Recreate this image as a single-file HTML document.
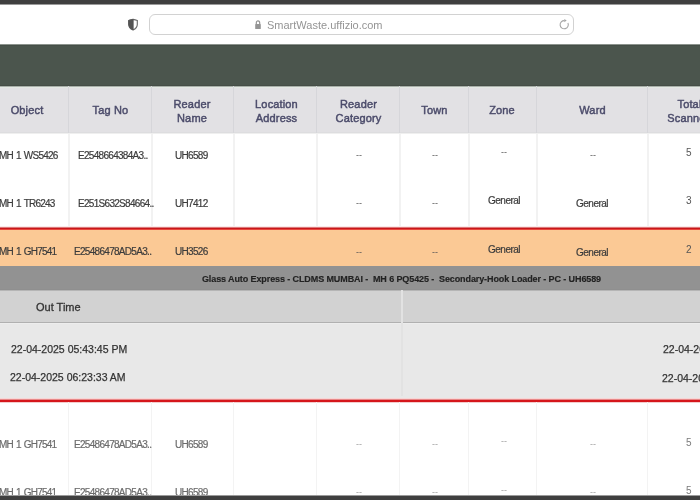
<!DOCTYPE html>
<html><head><meta charset="utf-8">
<style>
*{margin:0;padding:0;box-sizing:border-box}
html,body{width:700px;height:500px;overflow:hidden;background:#fff;font-family:"Liberation Sans",sans-serif}
.a{position:absolute}
.t{position:absolute;white-space:nowrap;line-height:1;will-change:transform}
.vl{position:absolute;width:1px;background:#e6e6e6}
.hd{font-size:11px;color:#4b4b6a;-webkit-text-stroke:0.45px #4b4b6a;letter-spacing:0.15px;text-align:center}
.bd{font-size:10px;letter-spacing:-0.7px;color:#3c3c3c;-webkit-text-stroke:0.2px currentColor}
.mh{letter-spacing:-0.8px;word-spacing:1.1px}
.gn{letter-spacing:-0.5px}
.dash{font-size:9px;color:#555}
</style></head><body>
<!-- top dark bar -->
<div class="a" style="left:0;top:0;width:700px;height:4px;background:#3f3f3f"></div>
<div class="a" style="left:0;top:4px;width:700px;height:1px;background:#9a9a9a"></div>
<!-- toolbar -->
<div class="a" style="left:0;top:5px;width:700px;height:39px;background:#fff"></div>
<!-- shield -->
<svg class="a" style="left:127px;top:18px" width="12" height="13" viewBox="0 0 12 13">
<path d="M6 1.4 Q8.4 1.7 10.3 2.5 L10.3 6.4 Q10.3 10 6 11.9 Q1.7 10 1.7 6.4 L1.7 2.5 Q3.6 1.7 6 1.4 Z" fill="none" stroke="#6c6c6c" stroke-width="1.15"/>
<path d="M6.2 1.4 Q3.6 1.7 1.7 2.5 L1.7 6.4 Q1.7 10 6.2 11.9 Z" fill="#545454" stroke="#545454" stroke-width="0.8"/>
</svg>
<!-- url pill -->
<div class="a" style="left:149px;top:14px;width:425px;height:21px;border:1px solid #d2d2d2;border-radius:6px;background:#fff"></div>
<svg class="a" style="left:254px;top:20px" width="8" height="10" viewBox="0 0 8 10">
<path d="M2.3 4.5 V3 C2.3 1.7 3.1 0.9 4 0.9 C4.9 0.9 5.7 1.7 5.7 3 V4.5" fill="none" stroke="#959595" stroke-width="1.2"/>
<rect x="1.2" y="4.1" width="5.6" height="4.9" rx="0.6" fill="#959595"/>
</svg>
<div class="t" style="left:267px;top:20px;font-size:11px;color:#949494">SmartWaste.uffizio.com</div>
<svg class="a" style="left:559px;top:18px" width="12" height="13" viewBox="0 0 12 13">
<path d="M8.9 4.9 A4.1 4.1 0 1 1 5.5 2.6" fill="none" stroke="#a5a5a5" stroke-width="1.1"/>
<path d="M5.3 0.9 L7.7 2.6 L5.3 4.3 Z" fill="#a5a5a5"/>
</svg>
<!-- green bar -->
<div class="a" style="left:0;top:44px;width:700px;height:42px;background:#4b554d"></div>
<div class="a" style="left:0;top:44px;width:700px;height:1px;background:#8c938d"></div>
<div class="a" style="left:0;top:45px;width:700px;height:1px;background:#454e47"></div>
<div class="a" style="left:0;top:85px;width:700px;height:1px;background:#454d46"></div>
<!-- header -->
<div class="a" style="left:0;top:86px;width:700px;height:47px;background:#e2e1e4"></div>
<div class="a" style="left:0;top:86px;width:700px;height:1px;background:#a9b0aa"></div>
<div class="a" style="left:0;top:87px;width:700px;height:1px;background:#e4e8e4"></div>
<div class="a" style="left:0;top:132px;width:700px;height:1px;background:#dddddf"></div>
<div class="a" style="left:0;top:133px;width:700px;height:1px;background:#efefef"></div>
<div class="vl" style="left:68px;top:86px;height:47px;background:#d6d6da"></div>
<div class="vl" style="left:68px;top:134px;height:93px;width:2px;background:#f2f2f2"></div>
<div class="vl" style="left:151px;top:86px;height:47px;background:#d6d6da"></div>
<div class="vl" style="left:151px;top:134px;height:93px;width:2px;background:#f2f2f2"></div>
<div class="vl" style="left:233px;top:86px;height:47px;background:#d6d6da"></div>
<div class="vl" style="left:233px;top:134px;height:93px;width:2px;background:#f2f2f2"></div>
<div class="vl" style="left:316px;top:86px;height:47px;background:#d6d6da"></div>
<div class="vl" style="left:316px;top:134px;height:93px;width:2px;background:#f2f2f2"></div>
<div class="vl" style="left:399px;top:86px;height:47px;background:#d6d6da"></div>
<div class="vl" style="left:399px;top:134px;height:93px;width:2px;background:#f2f2f2"></div>
<div class="vl" style="left:468px;top:86px;height:47px;background:#d6d6da"></div>
<div class="vl" style="left:468px;top:134px;height:93px;width:2px;background:#f2f2f2"></div>
<div class="vl" style="left:536px;top:86px;height:47px;background:#d6d6da"></div>
<div class="vl" style="left:536px;top:134px;height:93px;width:2px;background:#f2f2f2"></div>
<div class="vl" style="left:647px;top:86px;height:47px;background:#d6d6da"></div>
<div class="vl" style="left:647px;top:134px;height:93px;width:2px;background:#f2f2f2"></div>

<div class="t hd" style="left:-14px;width:82px;top:105px">Object</div>
<div class="t hd" style="left:69px;width:83px;top:105px">Tag No</div>
<div class="t hd" style="left:151px;width:82px;top:96.5px;line-height:14px">Reader<br>Name</div>
<div class="t hd" style="left:234.5px;width:83px;top:96.5px;line-height:14px">Location<br>Address</div>
<div class="t hd" style="left:317px;width:83px;top:96.5px;line-height:14px">Reader<br>Category</div>
<div class="t hd" style="left:400px;width:69px;top:105px">Town</div>
<div class="t hd" style="left:468px;width:68px;top:105px">Zone</div>
<div class="t hd" style="left:537px;width:111px;top:105px">Ward</div>
<div class="t hd" style="left:647px;width:85px;top:96.5px;line-height:14px">Total<br>Scanned</div>

<!-- rows 1-2 -->
<div class="t bd mh" style="left:-1px;top:151px">MH 1 WS5426</div>
<div class="t bd" style="left:78px;top:151px">E2548664384A3..</div>
<div class="t bd" style="left:175px;top:151px">UH6589</div>
<div class="t dash" style="left:356px;top:151px">--</div>
<div class="t dash" style="left:432px;top:151px">--</div>
<div class="t dash" style="left:501px;top:148px">--</div>
<div class="t dash" style="left:590px;top:151px">--</div>
<div class="t bd" style="left:686px;top:148px;-webkit-text-stroke:0;color:#555">5</div>

<div class="t bd mh" style="left:-1px;top:199px">MH 1 TR6243</div>
<div class="t bd" style="left:78px;top:199px">E251S632S84664..</div>
<div class="t bd" style="left:175px;top:199px">UH7412</div>
<div class="t dash" style="left:356px;top:199px">--</div>
<div class="t dash" style="left:432px;top:199px">--</div>
<div class="t bd gn" style="left:488px;top:196px">General</div>
<div class="t bd gn" style="left:576px;top:199px">General</div>
<div class="t bd" style="left:686px;top:196px;-webkit-text-stroke:0;color:#555">3</div>

<!-- red line -->
<div class="a" style="left:0;top:226px;width:700px;height:1px;background:#fbeaea"></div>
<div class="a" style="left:0;top:227px;width:700px;height:1px;background:#dc7a7a"></div>
<div class="a" style="left:0;top:228px;width:700px;height:1px;background:#c8161a"></div>
<div class="a" style="left:0;top:229px;width:700px;height:1px;background:#e8463c"></div>
<!-- orange row -->
<div class="a" style="left:0;top:230px;width:700px;height:36px;background:#fbc995"></div>
<div class="t bd mh" style="left:-1px;top:247px">MH 1 GH7541</div>
<div class="t bd" style="left:74px;top:247px">E25486478AD5A3..</div>
<div class="t bd" style="left:175px;top:247px">UH3526</div>
<div class="t dash" style="left:356px;top:248px">--</div>
<div class="t dash" style="left:432px;top:248px">--</div>
<div class="t bd gn" style="left:488px;top:245px">General</div>
<div class="t bd gn" style="left:576px;top:248px">General</div>
<div class="t bd" style="left:686px;top:245px;-webkit-text-stroke:0;color:#555">2</div>

<!-- gray title bar -->
<div class="a" style="left:0;top:266px;width:700px;height:24px;background:#929292"></div>
<div class="t" style="left:0;width:803px;top:275px;font-size:9px;letter-spacing:-0.1px;font-weight:bold;color:#222;-webkit-text-stroke:0.15px #222;text-align:center;white-space:pre">Glass Auto Express - CLDMS MUMBAI -  MH 6 PQ5425 -  Secondary-Hook Loader - PC - UH6589</div>

<!-- sub header -->
<div class="a" style="left:0;top:290px;width:700px;height:32px;background:#d2d2d2"></div>
<div class="a" style="left:0;top:290px;width:700px;height:1px;background:#b5b5b5"></div>
<div class="a" style="left:0;top:289px;width:700px;height:1px;background:#8f8f8f"></div>
<div class="a" style="left:0;top:322px;width:700px;height:1px;background:#b0b0b0"></div>
<div class="a" style="left:0;top:323px;width:700px;height:75px;background:#e8e8e8"></div>
<div class="a" style="left:0;top:323px;width:700px;height:1px;background:#ededed"></div>
<div class="vl" style="left:401px;top:290px;height:106px;width:2px;background:#e2e2e2"></div>
<div class="t" style="left:36px;top:301.5px;font-size:11px;color:#333;-webkit-text-stroke:0.3px #333">Out Time</div>
<div class="t" style="left:11px;top:344px;font-size:10.5px;color:#333;-webkit-text-stroke:0.25px #333">22-04-2025 05:43:45 PM</div>
<div class="t" style="left:10px;top:372px;font-size:10.5px;color:#333;-webkit-text-stroke:0.25px #333">22-04-2025 06:23:33 AM</div>
<div class="t" style="left:663px;top:344px;font-size:10.5px;color:#333;-webkit-text-stroke:0.25px #333">22-04-2025 05:43:45 PM</div>
<div class="t" style="left:662px;top:373px;font-size:10.5px;color:#333;-webkit-text-stroke:0.25px #333">22-04-2025 06:23:33 AM</div>

<!-- red line 2 -->
<div class="a" style="left:0;top:398px;width:700px;height:1px;background:#f6d6d6"></div>
<div class="a" style="left:0;top:399px;width:700px;height:1px;background:#e88888"></div>
<div class="a" style="left:0;top:400px;width:700px;height:2px;background:#d5161b"></div>
<div class="a" style="left:0;top:402px;width:700px;height:1px;background:#f4cccc"></div>

<!-- lower rows -->
<div class="vl" style="left:68px;top:402px;height:93px;width:1px;background:#f3f3f3"></div>
<div class="vl" style="left:151px;top:402px;height:93px;width:1px;background:#f3f3f3"></div>
<div class="vl" style="left:233px;top:402px;height:93px;width:1px;background:#f3f3f3"></div>
<div class="vl" style="left:316px;top:402px;height:93px;width:1px;background:#f3f3f3"></div>
<div class="vl" style="left:399px;top:402px;height:93px;width:1px;background:#f3f3f3"></div>
<div class="vl" style="left:468px;top:402px;height:93px;width:1px;background:#f3f3f3"></div>
<div class="vl" style="left:536px;top:402px;height:93px;width:1px;background:#f3f3f3"></div>
<div class="vl" style="left:647px;top:402px;height:93px;width:1px;background:#f3f3f3"></div>

<div style="position:absolute;left:0;top:0;width:700px;height:495px">
<div class="t bd mh" style="left:-1px;top:440px;color:#6c6c6c">MH 1 GH7541</div>
<div class="t bd" style="left:74px;top:440px;color:#6c6c6c">E25486478AD5A3..</div>
<div class="t bd" style="left:175px;top:440px;color:#6c6c6c">UH6589</div>
<div class="t dash" style="left:356px;top:440px;color:#a0a0a0">--</div>
<div class="t dash" style="left:432px;top:440px;color:#a0a0a0">--</div>
<div class="t dash" style="left:501px;top:437px;color:#a0a0a0">--</div>
<div class="t dash" style="left:590px;top:440px;color:#a0a0a0">--</div>
<div class="t bd" style="left:686px;top:438px;-webkit-text-stroke:0;color:#7a7a7a">5</div>
<div class="t bd mh" style="left:-1px;top:488px;color:#6c6c6c">MH 1 GH7541</div>
<div class="t bd" style="left:74px;top:488px;color:#6c6c6c">E25486478AD5A3..</div>
<div class="t bd" style="left:175px;top:488px;color:#6c6c6c">UH6589</div>
<div class="t dash" style="left:356px;top:488px;color:#a0a0a0">--</div>
<div class="t dash" style="left:432px;top:488px;color:#a0a0a0">--</div>
<div class="t dash" style="left:501px;top:486px;color:#a0a0a0">--</div>
<div class="t dash" style="left:590px;top:488px;color:#a0a0a0">--</div>
<div class="t bd" style="left:686px;top:486px;-webkit-text-stroke:0;color:#7a7a7a">5</div>
</div>

<!-- bottom dark bar -->
<div class="a" style="left:0;top:495px;width:700px;height:1px;background:#9a9a9a"></div>
<div class="a" style="left:0;top:496px;width:700px;height:4px;background:#3f3f3f"></div>
</body></html>
